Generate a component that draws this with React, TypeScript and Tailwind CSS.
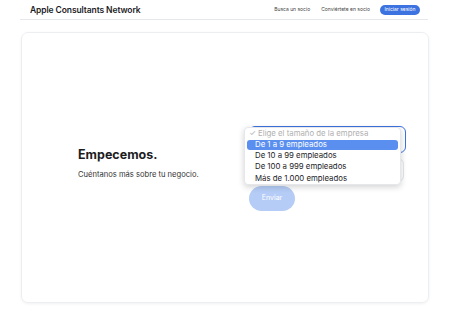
import React from "react";

export default function App() {
  const font = { fontFamily: "Inter, 'Liberation Sans', sans-serif" };
  return (
    <div className="w-[450px] h-[314px] bg-white overflow-hidden relative" style={font}>
      <header className="mx-[20px] w-[408px] h-[20px] border-b border-gray-200 flex items-center justify-between pl-[10px] pr-[8px]">
        <div className="text-[8.5px] font-semibold text-[#1d1d1f] tracking-[-0.1px] mt-[1px]">Apple Consultants Network</div>
        <nav className="flex items-center">
          <span className="text-[5px] text-[#444]">Busca un socio</span>
          <span className="text-[5px] text-[#444] ml-[11px]">Conviértete en socio</span>
          <button className="ml-[10px] h-[10px] w-[40px] rounded-full bg-[#3d73e0] text-white text-[5px] flex items-center justify-center">Iniciar sesión</button>
        </nav>
      </header>
      <main className="mt-[12px] ml-[21px] w-[408px] h-[271px] rounded-[7px] border border-gray-200/70 shadow-[0_1px_3px_rgba(0,0,0,0.06)] flex items-center">
        <div className="pl-[56px] w-[222px] -mt-[7px]">
          <h1 className="text-[12.5px] font-bold text-[#1d1d1f] leading-none">Empecemos.</h1>
          <p className="text-[7.6px] text-[#333] mt-[9px] leading-none">Cuéntanos más sobre tu negocio.</p>
        </div>
        <div className="relative flex flex-col pl-[5px] mt-[2px]">
          <div className="w-[157px] h-[27px] rounded-[6px] border-[1.5px] border-[#3d73e0]" />
          <div className="w-[155px] h-[24px] mt-[5px] rounded-[6px] border border-gray-200" />
          <button className="mt-[4px] w-[46px] h-[25px] rounded-full bg-[#b5cdf6] text-white text-[7px] flex items-center justify-center">Enviar</button>
          <div className="absolute left-0 top-[1px] w-[157px] h-[58px] rounded-[4px] bg-white border border-gray-200 shadow-[0_2px_6px_rgba(0,0,0,0.18)] px-[2px] text-[7.8px] text-[#1d1d1f] leading-none">
            <div className="h-[11.25px] flex items-center pl-[2px] text-[#b0b0b0]">✓ Elige el tamaño de la empresa</div>
            <div className="h-[11.25px] py-[0.5px]">
              <div className="h-full flex items-center pl-[8px] rounded-[3px] bg-[#5a8ff0] text-white">De 1 a 9 empleados</div>
            </div>
            <div className="h-[11.25px] flex items-center pl-[8px]">De 10 a 99 empleados</div>
            <div className="h-[11.25px] flex items-center pl-[8px]">De 100 a 999 empleados</div>
            <div className="h-[11.25px] flex items-center pl-[8px]">Más de 1.000 empleados</div>
          </div>
        </div>
      </main>
    </div>
  );
}
